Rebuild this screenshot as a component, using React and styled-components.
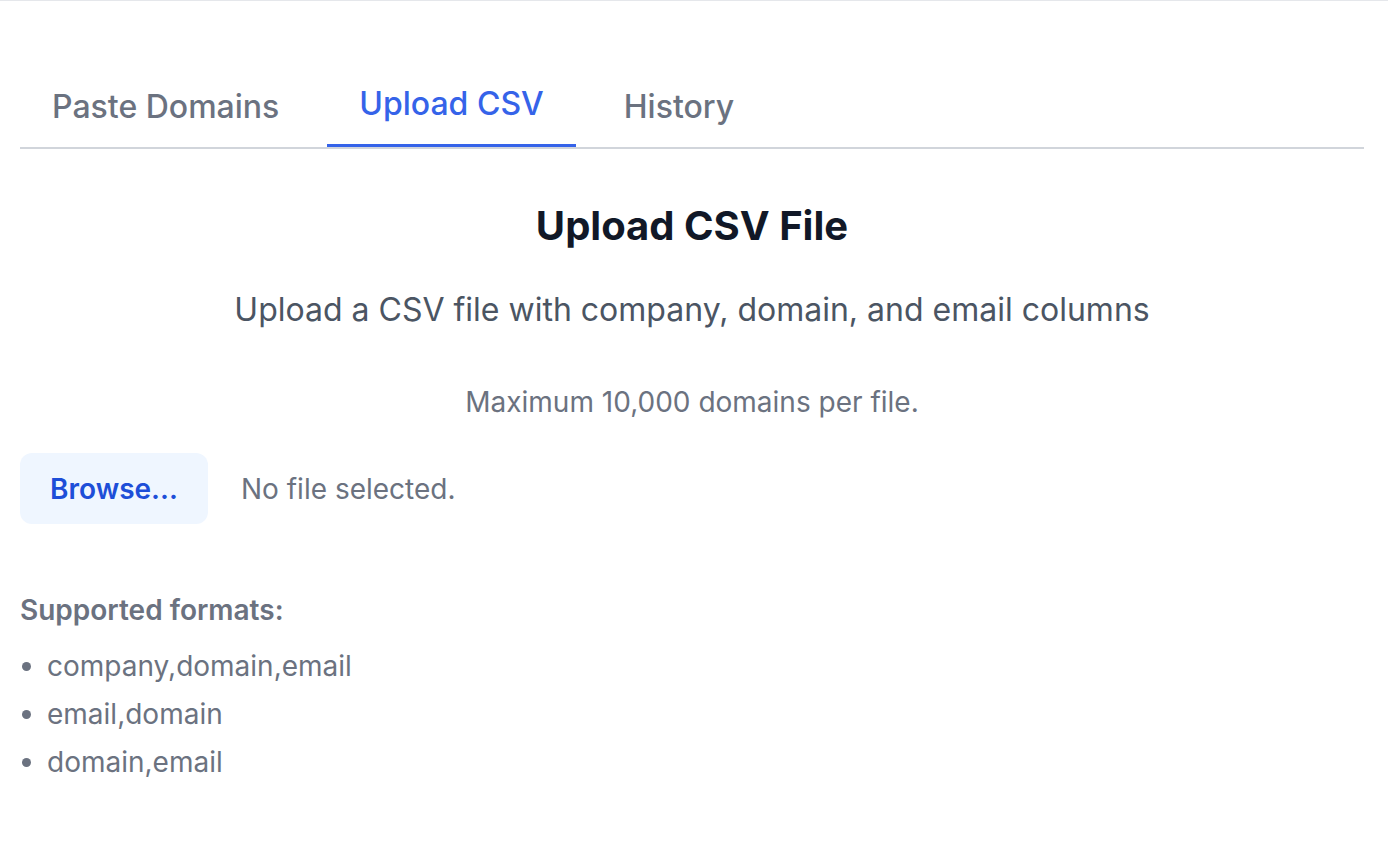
import React, { useState } from "react";
import styled, { createGlobalStyle } from "styled-components";

const Global = createGlobalStyle`
  html, body { margin: 0; padding: 0; background: #ffffff; }
  body { font-family: Inter, "Noto Sans", sans-serif; -webkit-font-smoothing: antialiased; }
  * { box-sizing: border-box; }
`;

const Page = styled.div`
  border-top: 1px solid #e5e7eb;
  padding: 0 24px 0 20px;
  min-height: 842px;
`;

const TabBar = styled.div`
  display: flex;
  align-items: flex-end;
  gap: 16px;
  margin-top: 81px;
  border-bottom: 2px solid #d1d5db;
`;

const Tab = styled.button`
  font-family: inherit;
  font-size: 32px;
  font-weight: 500;
  line-height: 44px;
  background: none;
  border: none;
  padding: 0 32px 18px;
  border-bottom: ${(p) => (p.$active ? "3px solid #3563e9" : "none")};
  color: ${(p) => (p.$active ? "#3563e9" : "#6b7280")};
  cursor: pointer;
`;

const Panel = styled.div`
  display: flex;
  flex-direction: column;
`;

const Title = styled.h2`
  margin: 53px 0 0;
  text-align: center;
  font-size: 40px;
  line-height: 48px;
  font-weight: 700;
  color: #111827;
`;

const Subtitle = styled.p`
  margin: 38px 0 0;
  text-align: center;
  font-size: 32px;
  line-height: 44px;
  color: #4b5563;
`;

const Note = styled.p`
  margin: 50px 0 0;
  text-align: center;
  font-size: 28px;
  line-height: 40px;
  color: #6b7280;
`;

const FileRow = styled.div`
  display: flex;
  align-items: center;
  gap: 33px;
  margin-top: 31px;
`;

const BrowseButton = styled.button`
  font-family: inherit;
  width: 188px;
  height: 71px;
  border: none;
  border-radius: 12px;
  background: #eff6ff;
  color: #1d4ed8;
  font-size: 28px;
  font-weight: 600;
  cursor: pointer;
`;

const FileStatus = styled.span`
  font-size: 28px;
  color: #6b7280;
`;

const FormatsTitle = styled.h3`
  margin: 66px 0 0;
  font-size: 28px;
  line-height: 40px;
  font-weight: 600;
  color: #6b7280;
`;

const FormatList = styled.ul`
  margin: 12px 0 0;
  padding: 0 0 0 27px;
  list-style: disc;
  color: #6b7280;
`;

const FormatItem = styled.li`
  font-size: 28px;
  line-height: 48px;
`;

const tabs = ["Paste Domains", "Upload CSV", "History"];
const formats = ["company,domain,email", "email,domain", "domain,email"];

export default function App() {
  const [active, setActive] = useState(1);
  return (
    <>
      <Global />
      <Page>
        <TabBar>
          {tabs.map((t, i) => (
            <Tab key={t} $active={i === active} onClick={() => setActive(i)}>
              {t}
            </Tab>
          ))}
        </TabBar>
        <Panel>
          <Title>Upload CSV File</Title>
          <Subtitle>Upload a CSV file with company, domain, and email columns</Subtitle>
          <Note>Maximum 10,000 domains per file.</Note>
          <FileRow>
            <BrowseButton>Browse...</BrowseButton>
            <FileStatus>No file selected.</FileStatus>
          </FileRow>
          <FormatsTitle>Supported formats:</FormatsTitle>
          <FormatList>
            {formats.map((f) => (
              <FormatItem key={f}>{f}</FormatItem>
            ))}
          </FormatList>
        </Panel>
      </Page>
    </>
  );
}
